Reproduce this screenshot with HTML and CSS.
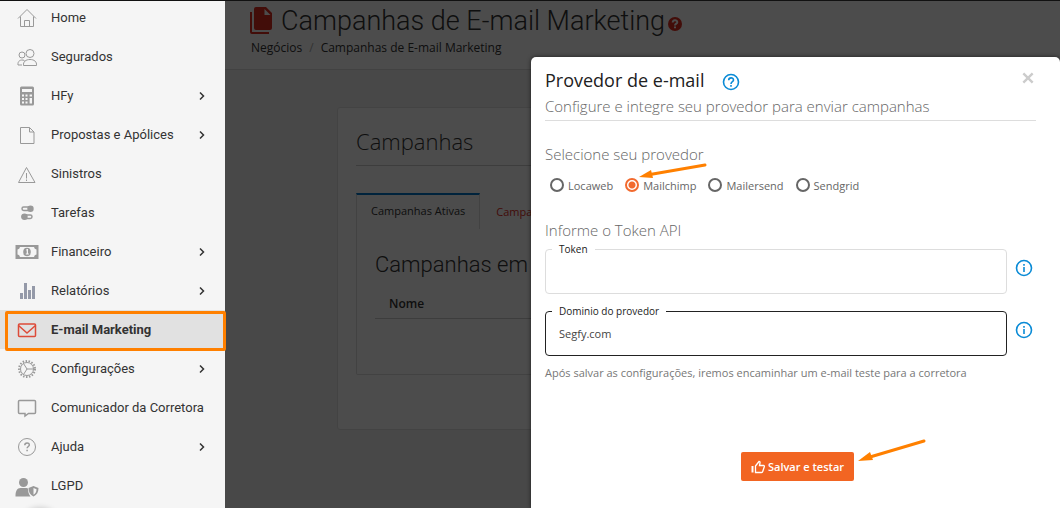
FILE: index.html
```html
<!DOCTYPE html>
<html lang="pt-BR">
<head>
    <meta charset="UTF-8">
    <meta name="viewport" content="width=device-width, initial-scale=1.0">
    <title>Campanhas de E-mail Marketing</title>
    <link rel="stylesheet" href="styles.css">
</head>
<body>
    <div class="app">
        <!-- Sidebar -->
        <nav class="sidebar">
            <ul class="menu">
                <li><a href="#" class="menu-link">
                    <svg class="menu-icon" viewBox="0 0 24 24"><path d="M3 12.5 12 3.5l9 9M5.5 10.500V20.500h13V10.500M9.500 20.500v-6h5v6"/></svg>
                    <span>Home</span>
                </a></li>
                <li><a href="#" class="menu-link">
                    <svg class="menu-icon" viewBox="0 0 24 24"><circle cx="15" cy="8.500" r="4"/><circle cx="7" cy="10" r="3"/><path d="M8.500 20.500c-.5-4 2.500-6 6.500-6s7 2 6.500 6zM9.500 15.500c-4-1.500-7 .5-6.500 4.500h4"/></svg>
                    <span>Segurados</span>
                </a></li>
                <li><a href="#" class="menu-link">
                    <svg class="menu-icon" viewBox="0 0 24 24"><rect class="fill" x="5" y="2.500" width="14" height="19" rx="1.500"/><path class="light" d="M7 5h10v3H7z"/><path class="light" d="M7 10.500h2v2H7zM10.500 10.500h2v2h-2zM14.600 10.500H17v2h-2.400zM7 14h2v2H7zM10.500 14h2v2h-2zM14.600 14H17v5.500h-2.400zM7 17.500h2v2H7zM10.500 17.500h2v2h-2z"/></svg>
                    <span>HFy</span>
                    <svg class="chevron" viewBox="0 0 8 8"><path d="M2 0.500 5.500 4 2 7.500"/></svg>
                </a></li>
                <li><a href="#" class="menu-link">
                    <svg class="menu-icon" viewBox="0 0 24 24"><path d="M5.500 4.500h9l4.500 4.500v11.500h-13.500zM14.500 4.500v4.500h4.500"/></svg>
                    <span>Propostas e Apólices</span>
                    <svg class="chevron" viewBox="0 0 8 8"><path d="M2 0.500 5.500 4 2 7.500"/></svg>
                </a></li>
                <li><a href="#" class="menu-link">
                    <svg class="menu-icon" viewBox="0 0 24 24"><path d="M11.500 5.500 20 20.500H3.500zM11.500 11v5.500M11.500 17.500V19"/></svg>
                    <span>Sinistros</span>
                </a></li>
                <li><a href="#" class="menu-link">
                    <svg class="menu-icon" viewBox="0 0 24 24"><rect class="medium" x="7" y="6" width="10" height="3.500" rx="1.700"/><circle class="fill" cx="15.500" cy="7.700" r="3.200"/><rect class="medium" x="7" y="14" width="10" height="3.500" rx="1.700"/><circle class="fill" cx="9.500" cy="15.700" r="3.200"/></svg>
                    <span>Tarefas</span>
                </a></li>
                <li><a href="#" class="menu-link">
                    <svg class="menu-icon" viewBox="0 0 24 24"><path class="fill" d="M0.500 5h23v14H.5z"/><path class="light" d="M5 7h14a3 3 0 0 0 2.500 2.500v5A3 3 0 0 0 19 17H5a3 3 0 0 0-2.500-2.500v-5A3 3 0 0 0 5 7z"/><ellipse class="fill" cx="12" cy="12" rx="3.800" ry="4.300"/><path class="light" d="M10.800 10 12 9h1v4.500h.8v1h-3v-1h.9v-3z"/></svg>
                    <span>Financeiro</span>
                    <svg class="chevron" viewBox="0 0 8 8"><path d="M2 0.500 5.500 4 2 7.500"/></svg>
                </a></li>
                <li><a href="#" class="menu-link bars">
                    <svg class="menu-icon" viewBox="0 0 24 24"><path class="fill" d="M5 14h3v6H5zM9 4h3v16H9zM13 11h3v9h-3zM17 7h3v13h-3z"/></svg>
                    <span>Relatórios</span>
                    <svg class="chevron" viewBox="0 0 8 8"><path d="M2 0.500 5.500 4 2 7.500"/></svg>
                </a></li>
                <li class="active"><a href="#" class="menu-link">
                    <svg class="menu-icon" viewBox="0 0 24 24"><rect x="3.500" y="6" width="17" height="12.500" rx="1"/><path d="m3.500 7.500 8.500 7.500 8.500-7.500"/></svg>
                    <span>E-mail Marketing</span>
                </a></li>
                <li><a href="#" class="menu-link">
                    <svg class="menu-icon" viewBox="0 0 24 24"><circle class="cog" cx="12" cy="12" r="8"/><circle cx="12" cy="12" r="6.500"/><path d="M12 12h6.500M12 12 8.500 6.500M12 12l-3.500 5.500"/></svg>
                    <span>Configurações</span>
                    <svg class="chevron" viewBox="0 0 8 8"><path d="M2 0.500 5.500 4 2 7.500"/></svg>
                </a></li>
                <li><a href="#" class="menu-link">
                    <svg class="menu-icon" viewBox="0 0 24 24"><path class="medium" d="M4.500 4.500h15a1 1 0 0 1 1 1v11a1 1 0 0 1-1 1h-6L10 20v-2.500H4.500a1 1 0 0 1-1-1v-11a1 1 0 0 1 1-1z"/></svg>
                    <span>Comunicador da Corretora</span>
                </a></li>
                <li><a href="#" class="menu-link">
                    <svg class="menu-icon" viewBox="0 0 24 24"><circle cx="12" cy="12" r="8.500"/><path class="medium" d="M9.800 10.300c0-3 4.500-3 4.500-.4 0 1.600-2.200 1.600-2.200 3.400M12.100 14.800v1.400"/></svg>
                    <span>Ajuda</span>
                    <svg class="chevron" viewBox="0 0 8 8"><path d="M2 0.500 5.500 4 2 7.500"/></svg>
                </a></li>
                <li><a href="#" class="menu-link">
                    <svg class="menu-icon" viewBox="0 0 24 24"><circle class="fill" cx="8.500" cy="8.500" r="4.500"/><path class="fill" d="M.5 22.500c0-5.500 1.500-8.500 5-8.500h6l1.500.5c0 3 .8 6 2.500 8z"/><path class="fill" d="m18.500 12 5 2c0 4-1.500 7-5 8.500-3.500-1.500-5-4.500-5-8.500z"/><path class="light" d="m18.500 14 3 1.200c0 2.400-1 4.500-3 5.500z"/></svg>
                    <span>LGPD</span>
                </a></li>
            </ul>
            <div class="chat-shadow"></div>
        </nav>

        <!-- Page -->
        <main class="page">
            <header class="page-header">
                <h1>
                    <svg class="title-icon" viewBox="0 0 24 28"><path d="M7 0h10l6 6v15a2 2 0 0 1-2 2H7a2 2 0 0 1-2-2V2a2 2 0 0 1 2-2zM1 5h2v20h17v2H3a2 2 0 0 1-2-2z"/><path class="fold" d="M15.500 2v6h6z"/></svg>
                    Campanhas de E-mail Marketing
                    <svg class="title-help" viewBox="0 0 14 14"><circle cx="7" cy="7" r="7"/><path d="M4.700 5.500c0-3 4.600-3 4.600-.3C9.300 6.700 7 6.700 7 8.500M7 9.500v1.800"/></svg>
                </h1>
                <div class="breadcrumb">
                    <a href="#">Negócios</a><span class="sep">/</span><a href="#">Campanhas de E-mail Marketing</a>
                </div>
            </header>

            <section class="card">
                <h2>Campanhas</h2>
                <div class="tabs">
                    <a href="#" class="tab selected">Campanhas Ativas</a>
                    <a href="#" class="tab">Campanhas Inativas</a>
                </div>
                <div class="tab-panel">
                    <h3>Campanhas em Andamento</h3>
                    <table>
                        <thead>
                            <tr><th>Nome</th></tr>
                        </thead>
                    </table>
                </div>
            </section>
        </main>

        <!-- Modal -->
        <div class="backdrop">
            <form class="modal">
                <div class="modal-title">
                    <h2>Provedor de e-mail</h2>
                    <svg class="help-icon" viewBox="0 0 18 18"><circle cx="9" cy="9" r="7.500"/><path d="M6.700 7.300c0-3.200 4.800-3.200 4.800-.3C11.500 8.700 9 8.700 9 11M9 12v1.800"/></svg>
                    <button type="button" class="close" aria-label="Fechar">
                        <svg viewBox="0 0 12 12"><path d="m2.500 2.500 7 7M9.500 2.500l-7 7"/></svg>
                    </button>
                </div>
                <p class="subtitle">Configure e integre seu provedor para enviar campanhas</p>

                <p class="section-label">Selecione seu provedor</p>
                <div class="providers">
                    <label><input type="radio" name="provider">Locaweb</label>
                    <label><input type="radio" name="provider" checked>Mailchimp</label>
                    <label><input type="radio" name="provider">Mailersend</label>
                    <label><input type="radio" name="provider">Sendgrid</label>
                    <svg class="arrow arrow-provider" viewBox="0 0 70 18"><path class="shaft" d="M67 3 12 12.500"/><path class="head" d="m1 15 12-7 2 8z"/></svg>
                </div>

                <p class="section-label">Informe o Token API</p>
                <div class="field-row">
                    <fieldset class="field">
                        <legend><label for="token">Token</label></legend>
                        <input type="text" id="token">
                    </fieldset>
                    <svg class="info-icon" viewBox="0 0 18 18"><circle cx="9" cy="9" r="7.500"/><path d="M9 8v5M9 5v1.800"/></svg>
                </div>
                <div class="field-row">
                    <fieldset class="field focused">
                        <legend><label for="domain">Dominio do provedor</label></legend>
                        <input type="text" id="domain" value="Segfy.com">
                    </fieldset>
                    <svg class="info-icon" viewBox="0 0 18 18"><circle cx="9" cy="9" r="7.500"/><path d="M9 8v5M9 5v1.800"/></svg>
                </div>
                <p class="hint">Após salvar as configurações, iremos encaminhar um e-mail teste para a corretora</p>

                <div class="actions">
                    <button type="button" class="save-btn">
                        <svg viewBox="0 0 14 14"><path d="M4.500 6 8 1.500c1 0 1.200.6 1 1.500l-.5 2.500h4c.7 0 1 .5.8 1.200l-1.500 4.600c-.2.800-.6 1.200-1.300 1.200h-6z"/><path class="cuff" d="M1.500 6v6.500"/></svg>
                        Salvar e testar
                    </button>
                    <svg class="arrow arrow-save" viewBox="0 0 70 24"><path class="shaft" d="M67 3 13 19"/><path class="head" d="m1 23 12-9 3 8z"/></svg>
                </div>
            </form>
        </div>
    </div>
</body>
</html>
```
FILE: styles.css
```css
* {
    box-sizing: border-box;
    margin: 0;
    padding: 0;
}

body {
    background-color: #f0f0f0;
    color: #333;
    font-family: "Open Sans", sans-serif;
    font-size: 12px;
    overflow: hidden;
}

a {
    color: inherit;
    text-decoration: none;
}

svg {
    flex: none;
    fill: none;
    stroke: currentColor;
}

.app {
    position: relative;
    display: flex;
    height: 100vh;
    border-top: 1px solid #111;
    overflow: hidden;
}

/* Sidebar */
.sidebar {
    position: relative;
    z-index: 2;
    flex: none;
    width: 225px;
    background-color: #f5f5f5;
    font-family: Roboto, sans-serif;
}

.menu {
    margin-top: -3px;
    list-style: none;
}

.menu-link {
    display: flex;
    align-items: center;
    gap: 12px;
    height: 39px;
    padding: 0 19px 0 15px;
    font-size: 13px;
}

.menu-icon {
    width: 24px;
    height: 24px;
    color: #999;
}

.menu-icon .fill {
    fill: currentColor;
    stroke: none;
}

.menu-icon .light {
    fill: #f5f5f5;
    stroke: none;
}

.menu-icon .medium {
    stroke-width: 1.5;
}

.menu-icon .cog {
    stroke-width: 2;
    stroke-dasharray: 1.5 1.5;
}

.bars .menu-icon {
    color: #9499a8;
}

.chevron {
    width: 8px;
    height: 8px;
    margin-left: auto;
    stroke-width: 1.5;
}

.active {
    position: relative;
    background-color: #e1e1e1;
    font-weight: bold;
}

.active .menu-icon {
    color: #dd4b39;
    stroke-width: 1.5;
}

.active::after {
    content: "";
    position: absolute;
    top: 1px;
    right: -1px;
    bottom: -2px;
    left: 5px;
    border: 3px solid #ff8000;
    border-radius: 2px;
}

.chat-shadow {
    position: absolute;
    bottom: -40px;
    left: 20px;
    width: 40px;
    height: 40px;
    border-radius: 50%;
    box-shadow: 0 0 6px rgba(0, 0, 0, 0.2);
}

/* Page */
.page {
    flex: 1;
    min-width: 0;
}

.page-header {
    height: 69px;
    padding: 4px 24px;
    background-color: #fff;
    border-bottom: 1px solid #ddd;
}

.page-header h1 {
    display: flex;
    align-items: center;
    height: 32px;
    font-family: Roboto, sans-serif;
    font-size: 27px;
    font-weight: 300;
    white-space: nowrap;
}

.title-icon {
    width: 24px;
    height: 28px;
    margin-right: 8px;
    fill: #dd2c1e;
    stroke: none;
}

.title-icon .fold {
    fill: #fff;
}

.title-help {
    width: 14px;
    height: 14px;
    margin: 6px 0 0 3px;
    fill: #dd2c1e;
    stroke: none;
}

.title-help path {
    fill: none;
    stroke: #fff;
    stroke-width: 2;
}

.breadcrumb {
    padding-left: 2px;
    line-height: 16px;
    margin-top: 3px;
}

.breadcrumb .sep {
    padding: 0 7px;
    color: #aaa;
}

.card {
    height: 323px;
    margin: 37px 24px 0 112px;
    padding: 17px 18px;
    background-color: #fff;
    border: 1px solid #e0e0e0;
    border-radius: 3px;
}

.card h2 {
    height: 41px;
    border-bottom: 1px solid #ccc;
    font-size: 22px;
    font-weight: 300;
    line-height: 32px;
}

.tabs {
    display: flex;
    margin-top: 27px;
}

.tab {
    padding: 8px 16px;
    border-top: 2px solid transparent;
    color: #dd2c1e;
    font-size: 11px;
    line-height: 18px;
}

.tab.selected {
    padding: 7px 14px 9px;
    border: 1px solid #ddd;
    border-top: 2px solid #0275c8;
    border-bottom: none;
    color: #333;
}

.tab-panel {
    height: 146px;
    padding: 20px 18px;
    border: 1px solid #ddd;
    border-top: none;
    border-radius: 0 0 2px 2px;
}

.tab-panel h3 {
    font-family: Roboto, sans-serif;
    font-size: 22px;
    font-weight: 300;
    line-height: 32px;
}

table {
    width: 100%;
    margin-top: 8px;
    border-collapse: collapse;
}

th {
    height: 29px;
    padding: 0 14px;
    border-bottom: 1px solid #ccc;
    font-size: 12px;
    font-weight: 600;
    text-align: left;
}

/* Modal */
.backdrop {
    position: absolute;
    inset: 0;
    display: flex;
    justify-content: flex-end;
    padding: 56px 0 0 225px;
    background-color: rgba(0, 0, 0, 0.7);
}

.modal {
    width: 529px;
    padding: 10px 24px 0 14px;
    background-color: #fff;
    border-radius: 5px 5px 0 0;
    box-shadow: 0 0 4px rgba(0, 0, 0, 0.6);
    color: #666;
}

.modal-title {
    display: flex;
    align-items: center;
    height: 25px;
}

.modal-title h2 {
    color: #212121;
    font-size: 18px;
    font-weight: 500;
}

.help-icon,
.info-icon {
    width: 18px;
    height: 18px;
    color: #0a8bd6;
    stroke-width: 1.6;
}

.help-icon {
    margin: 4px 0 0 18px;
}

.close {
    width: 16px;
    height: 16px;
    margin: 0 0 4px auto;
    border: none;
    background: none;
    color: #ccc;
    cursor: pointer;
}

.close svg {
    display: block;
    width: 16px;
    height: 16px;
    stroke-width: 1.8;
}

.subtitle {
    height: 29px;
    border-bottom: 1px solid #ddd;
    font-size: 15px;
    font-weight: 300;
    line-height: 28px;
}

.section-label {
    margin-top: 23px;
    color: #666;
    font-size: 15px;
    font-weight: 300;
    line-height: 20px;
}

.providers {
    position: relative;
    display: flex;
    gap: 12px;
    margin: 13px 0 27px;
    padding-left: 5px;
}

.providers label {
    display: flex;
    align-items: center;
    gap: 4px;
    height: 16px;
    color: #666;
    font-size: 11px;
}

.providers input {
    appearance: none;
    width: 14px;
    height: 14px;
    border: 2px solid #666;
    border-radius: 50%;
}

.providers input:checked {
    border-color: #f26a2e;
    background: radial-gradient(#f26a2e 0 3px, #fff 4px);
}

.arrow {
    position: absolute;
}

.arrow .shaft {
    stroke: #ff8000;
    stroke-width: 3;
    stroke-linecap: round;
}

.arrow .head {
    fill: #ff8000;
    stroke: none;
}

.arrow-provider {
    top: -15px;
    left: 93px;
    width: 70px;
    height: 18px;
}

.providers + .section-label {
    margin-top: 0;
}

.field-row {
    display: flex;
    align-items: center;
    gap: 8px;
    margin-top: 1px;
}

.field {
    flex: 1;
    height: 53px;
    min-width: 0;
    padding: 0 13px;
    border: 1px solid #ddd;
    border-radius: 4px;
}

.field-row + .field-row {
    margin-top: 9px;
}

.field.focused {
    border-color: #222;
}

.field legend {
    margin-left: -7px;
    padding: 0 7px;
    color: #222;
    font-size: 10px;
    line-height: 16px;
}

.field input {
    display: block;
    width: 100%;
    height: 20px;
    margin-top: 4px;
    border: none;
    outline: none;
    background: none;
    color: #444;
    font-family: inherit;
    font-size: 11px;
}

.field-row .info-icon {
    margin-right: 3px;
}

.hint {
    margin-top: 8px;
    color: #777;
    font-size: 11px;
    line-height: 18px;
}

.actions {
    position: relative;
    display: flex;
    justify-content: center;
    margin-top: 70px;
    padding-left: 14px;
}

.save-btn {
    display: flex;
    align-items: center;
    gap: 3px;
    height: 29px;
    padding: 0 10px;
    border: none;
    border-radius: 2px;
    background-color: #f26522;
    color: #fff;
    font-family: inherit;
    font-size: 11px;
    font-weight: 600;
    cursor: pointer;
}

.save-btn svg {
    width: 14px;
    height: 14px;
    stroke-width: 1.3;
}

.save-btn .cuff {
    stroke-width: 2;
}

.arrow-save {
    top: -14px;
    left: 312px;
    width: 70px;
    height: 24px;
}
```
